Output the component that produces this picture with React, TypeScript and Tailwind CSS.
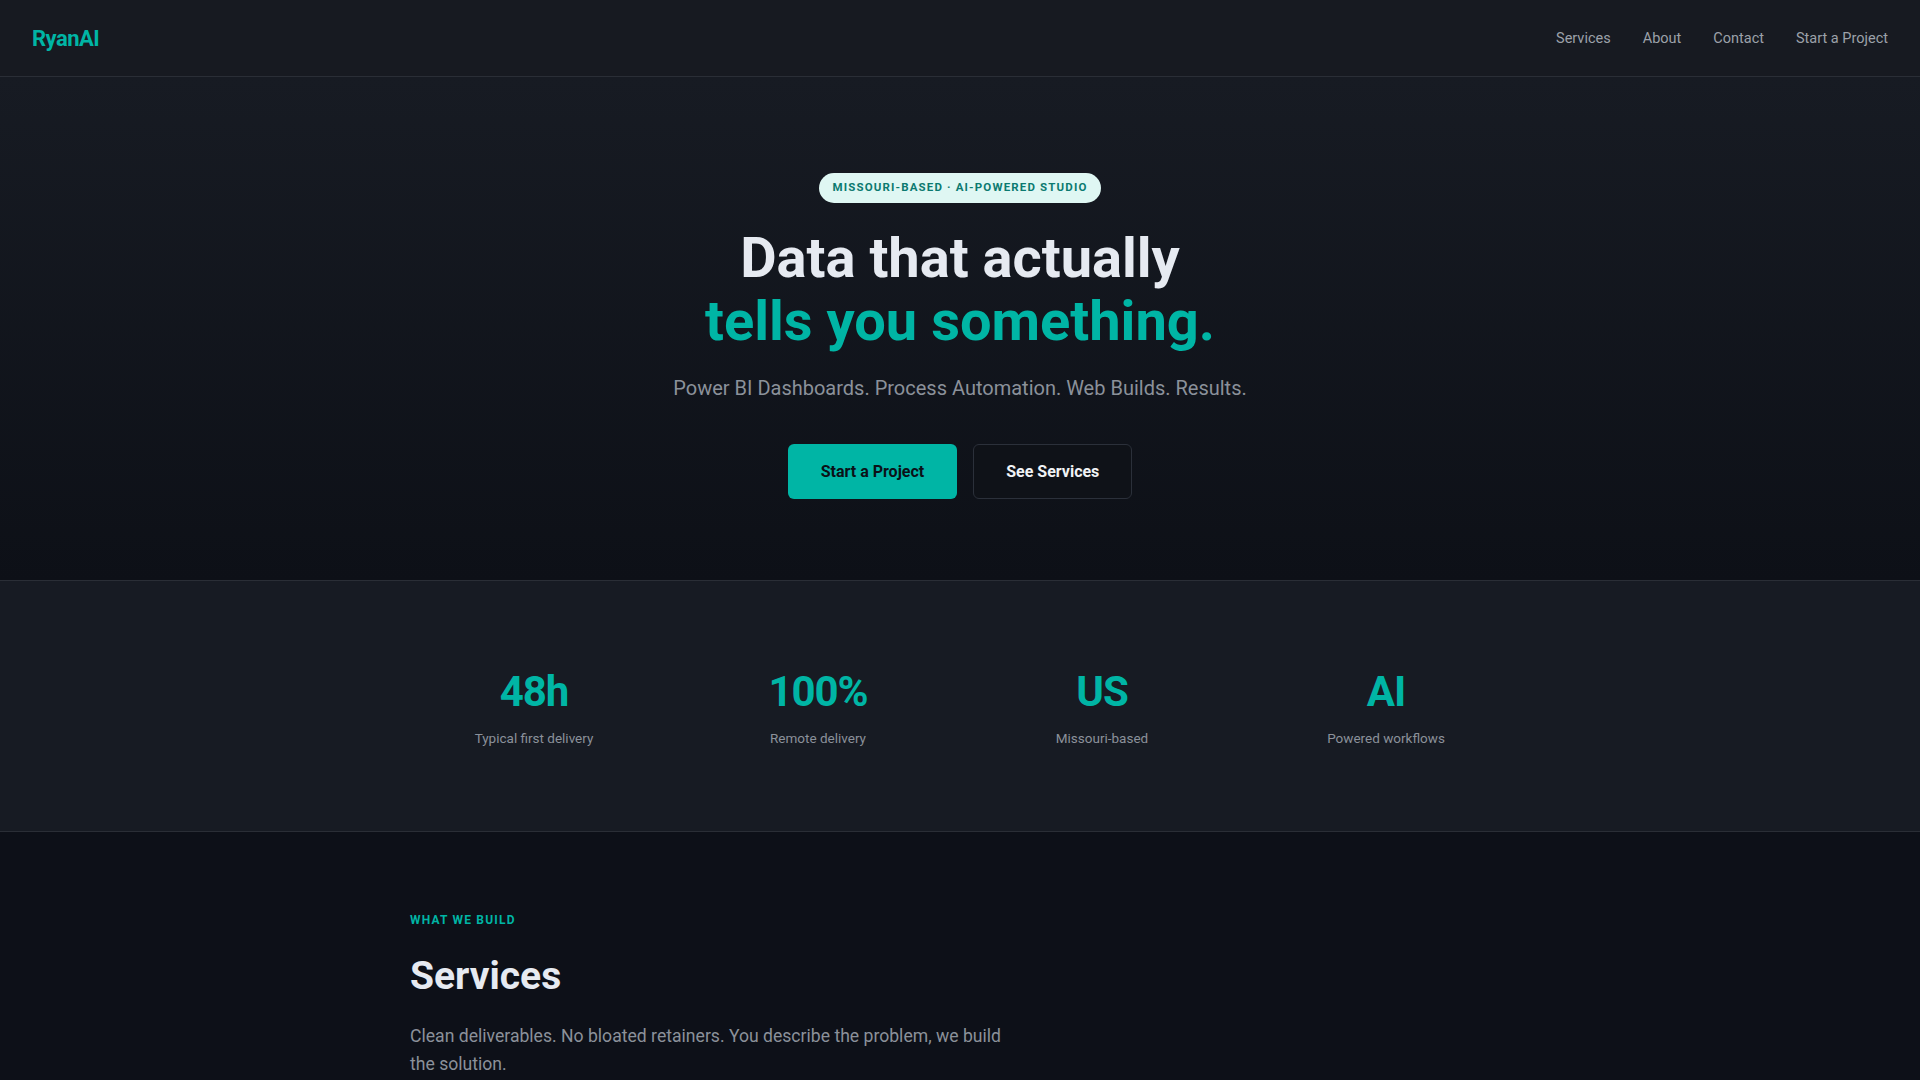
import React from 'react';

const navLinks = ['Services', 'About', 'Contact', 'Start a Project'];

const stats = [
  { value: '48h', label: 'Typical first delivery' },
  { value: '100%', label: 'Remote delivery' },
  { value: 'US', label: 'Missouri-based' },
  { value: 'AI', label: 'Powered workflows' },
];

const NavBar: React.FC = () => {
  return (
    <header className="h-[77px] flex items-center justify-between px-8 bg-[#171a21] border-b border-[#2a2e36]">
      <a href="#" className="text-[22px] font-bold tracking-tight text-[#00b5a5]">
        RyanAI
      </a>
      <nav className="flex items-center gap-8 pt-px">
        {navLinks.map((link) => (
          <a key={link} href="#" className="text-[14.5px] text-[#9ca1a9]">
            {link}
          </a>
        ))}
      </nav>
    </header>
  );
};

const Hero: React.FC = () => {
  return (
    <section className="bg-linear-to-b from-[#171b23] to-[#0d1017] pt-24 pb-[81px] flex flex-col items-center text-center">
      <span className="inline-flex items-center h-[30px] px-3.5 rounded-full bg-[#dff7f3] text-[#0b7a70] text-[11.5px] font-bold tracking-[0.1em]">
        MISSOURI-BASED · AI-POWERED STUDIO
      </span>
      <h1 className="mt-6 text-[56px] leading-[1.12] font-bold text-[#e6eaf1]">
        Data that actually
        <br />
        <span className="text-[#00b5a5]">tells you something.</span>
      </h1>
      <p className="mt-5 text-xl leading-8 text-[#8b919a]">
        Power BI Dashboards. Process Automation. Web Builds. Results.
      </p>
      <div className="mt-10 flex items-center gap-4">
        <a
          href="#"
          className="h-[55px] px-[33px] flex items-center rounded-md bg-[#00b5a5] text-base font-bold text-[#0b1117]"
        >
          Start a Project
        </a>
        <a
          href="#"
          className="h-[55px] px-8 flex items-center rounded-md border border-[#2b303a] bg-[#0f1218] text-base font-bold text-[#f1f3f6]"
        >
          See Services
        </a>
      </div>
    </section>
  );
};

const Stats: React.FC = () => {
  return (
    <section className="bg-[#171b23] border-y border-[#2a2e36] pt-[91px] pb-[83px]">
      <div className="max-w-6xl mx-auto px-6 grid grid-cols-4 gap-8">
        {stats.map((stat) => (
          <div key={stat.value} className="flex flex-col items-center">
            <div className="text-[42px] leading-10 font-bold tracking-tight text-[#00b5a5]">{stat.value}</div>
            <div className="mt-4 text-[13.5px] leading-5 text-[#8b919a]">{stat.label}</div>
          </div>
        ))}
      </div>
    </section>
  );
};

const Services: React.FC = () => {
  return (
    <section className="bg-[#0d1018] pt-20 pb-24 min-h-[400px]">
      <div className="max-w-6xl mx-auto px-[26px]">
        <div className="text-xs leading-4 font-bold tracking-[0.1em] text-[#00b5a5]">WHAT WE BUILD</div>
        <h2 className="mt-6 text-[39px] leading-[48px] font-bold text-[#e6eaf1]">Services</h2>
        <p className="mt-[22px] max-w-[600px] text-[17.6px] leading-7 text-[#8b919a]">
          Clean deliverables. No bloated retainers. You describe the problem, we build the solution.
        </p>
      </div>
    </section>
  );
};

export default function App() {
  return (
    <div className="min-h-screen bg-[#0d1018] font-['Roboto','Noto_Sans',sans-serif] antialiased">
      <NavBar />
      <Hero />
      <Stats />
      <Services />
    </div>
  );
}
